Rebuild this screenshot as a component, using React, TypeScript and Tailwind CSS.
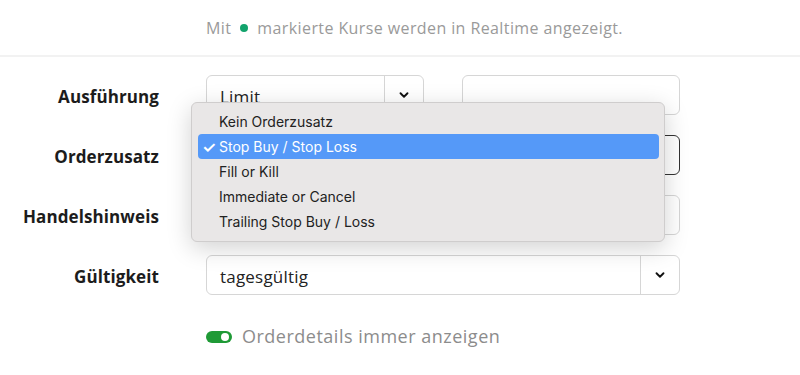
import React from 'react';
import { ChevronDown } from 'lucide-react';

const pageFont = { fontFamily: '"Open Sans", "Noto Sans", sans-serif' };

const Select: React.FC<{ value?: string; wide?: boolean; focused?: boolean }> = ({ value, wide, focused }) => (
  <div
    className={`flex h-10 rounded-md border bg-white ${wide ? 'w-[474px]' : 'w-[218px]'} ${
      focused ? 'border-[#333]' : 'border-[#d6d6d6]'
    }`}
  >
    <div className="flex flex-1 items-center pl-[13px] pt-[4px] text-[17px] tracking-[0.2px] text-[#222]">{value}</div>
    <div className="flex w-[39px] items-center justify-center border-l border-[#d6d6d6]">
      <ChevronDown size={14} strokeWidth={3.2} className="text-[#111]" />
    </div>
  </div>
);

const Row: React.FC<{ label: string; children: React.ReactNode }> = ({ label, children }) => (
  <div className="flex items-center">
    <div className="w-[160px] pr-px pt-[4px] text-right text-[17px] font-bold tracking-[0.1px] text-[#1c1c1c]">{label}</div>
    <div className="ml-[46px] flex gap-[38px]">{children}</div>
  </div>
);

const options = ['Kein Orderzusatz', 'Stop Buy / Stop Loss', 'Fill or Kill', 'Immediate or Cancel', 'Trailing Stop Buy / Loss'];

const App: React.FC = () => {
  return (
    <div className="relative h-[375px] w-[800px] overflow-hidden bg-white" style={pageFont}>
      <div className="flex h-[55px] items-center pl-[206px] text-[16px] tracking-[0.4px] text-[#9a9a9a]">
        Mit
        <span className="mx-[9px] inline-block h-[8px] w-[8px] rounded-full bg-[#12a36c]" />
        markierte Kurse werden in Realtime angezeigt.
      </div>
      <div className="h-[2px] bg-[#f2f2f2]" />

      <div className="flex flex-col gap-[20px] pt-[18px]">
        <Row label="Ausführung">
          <Select value="Limit" />
          <div className="h-10 w-[218px] rounded-md border border-[#d6d6d6] bg-white" />
        </Row>
        <Row label="Orderzusatz">
          <Select wide focused value="Stop Buy / Stop Loss" />
        </Row>
        <Row label="Handelshinweis">
          <Select wide value="" />
        </Row>
        <Row label="Gültigkeit">
          <Select wide value="tagesgültig" />
        </Row>
      </div>

      <div className="mt-[28px] flex items-center pl-[206px]">
        <div className="flex h-[12px] w-[26px] items-center justify-end rounded-full bg-[#1f9a36] pr-[3px]">
          <div className="h-[8px] w-[8px] rounded-full bg-white" />
        </div>
        <span className="ml-[10px] text-[18px] tracking-[0.5px] text-[#8c8c8c]">Orderdetails immer anzeigen</span>
      </div>

      <div
        className="absolute left-[191px] top-[102px] w-[474px] rounded-[6px] border border-[#cfcdcd] bg-[#e9e7e7] pl-[6px] pr-[5px] pt-[6px] pb-[7px] shadow-[0_6px_24px_rgba(0,0,0,0.18)]"
        style={{ fontFamily: 'Inter, "Noto Sans", sans-serif' }}
      >
        {options.map((o, i) => {
          const active = i === 1;
          return (
            <div
              key={o}
              className={`flex h-[25px] items-center rounded-[4px] text-[14px] ${
                active ? 'bg-[#5599f8] text-white' : 'text-[#222]'
              }`}
            >
              <span className="w-[21px] pl-[4px] text-[16px] font-semibold">{active ? '✓' : ''}</span>
              {o}
            </div>
          );
        })}
      </div>
    </div>
  );
};

export default App;
